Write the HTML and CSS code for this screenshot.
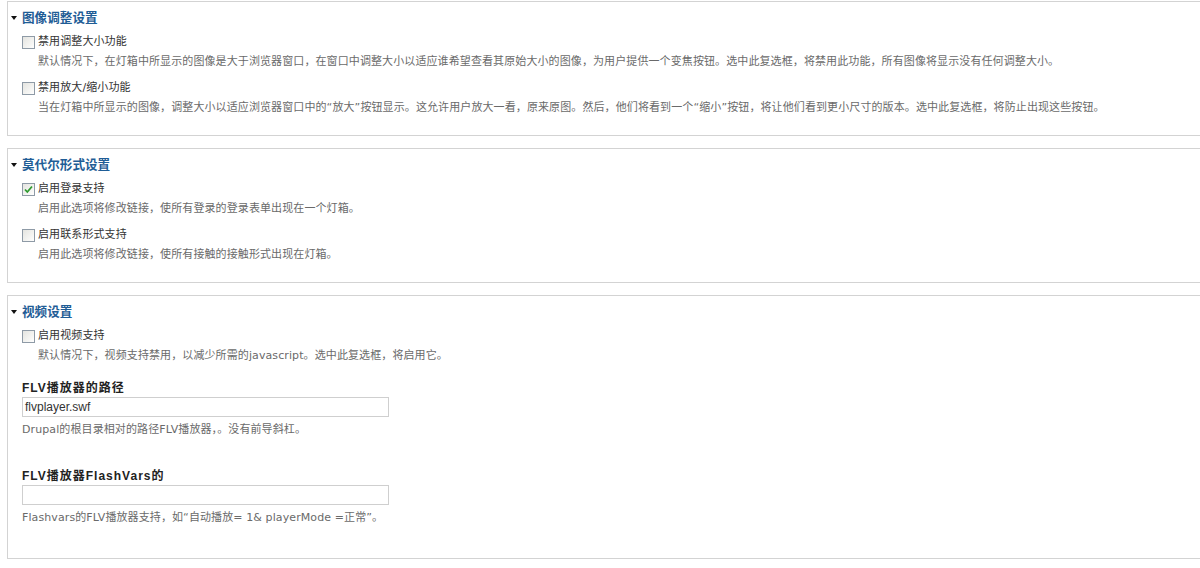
FILE: index.html
```html
<!DOCTYPE html>
<html lang="zh-CN">
<head>
<meta charset="utf-8">
<title>设置</title>
<link rel="stylesheet" href="styles.css">
</head>
<body>
<div class="page">
  <section class="box">
    <div class="legend"><span class="tri"></span>图像调整设置</div>
    <div class="item first">
      <div class="check-row"><span class="cb"></span><span class="lbl">禁用调整大小功能</span></div>
      <div class="desc indent">默认情况下，在灯箱中所显示的图像是大于浏览器窗口，在窗口中调整大小以适应谁希望查看其原始大小的图像，为用户提供一个变焦按钮。选中此复选框，将禁用此功能，所有图像将显示没有任何调整大小。</div>
    </div>
    <div class="item">
      <div class="check-row"><span class="cb"></span><span class="lbl">禁用放大/缩小功能</span></div>
      <div class="desc indent">当在灯箱中所显示的图像，调整大小以适应浏览器窗口中的“放大”按钮显示。这允许用户放大一看，原来原图。然后，他们将看到一个“缩小”按钮，将让他们看到更小尺寸的版本。选中此复选框，将防止出现这些按钮。</div>
    </div>
  </section>

  <section class="box">
    <div class="legend"><span class="tri"></span>莫代尔形式设置</div>
    <div class="item first">
      <div class="check-row"><span class="cb checked"><svg viewBox="0 0 13 13" width="13" height="13"><path d="M3 6.5 L5.3 9 L10 3.5" fill="none" stroke="#2f9a2f" stroke-width="1.8"/></svg></span><span class="lbl">启用登录支持</span></div>
      <div class="desc indent">启用此选项将修改链接，使所有登录的登录表单出现在一个灯箱。</div>
    </div>
    <div class="item">
      <div class="check-row"><span class="cb"></span><span class="lbl">启用联系形式支持</span></div>
      <div class="desc indent">启用此选项将修改链接，使所有接触的接触形式出现在灯箱。</div>
    </div>
  </section>

  <section class="box last">
    <div class="legend"><span class="tri"></span>视频设置</div>
    <div class="item first">
      <div class="check-row"><span class="cb"></span><span class="lbl">启用视频支持</span></div>
      <div class="desc indent">默认情况下，视频支持禁用，以减少所需的javascript。选中此复选框，将启用它。</div>
    </div>
    <div class="field f1">
      <div class="flabel">FLV播放器的路径</div>
      <div class="input">flvplayer.swf</div>
      <div class="desc">Drupal的根目录相对的路径FLV播放器，。没有前导斜杠。</div>
    </div>
    <div class="field f2">
      <div class="flabel">FLV播放器FlashVars的</div>
      <div class="input"></div>
      <div class="desc">Flashvars的FLV播放器支持，如“自动播放= 1&amp; playerMode =正常”。</div>
    </div>
  </section>
</div>
</body>
</html>
```

FILE: styles.css
```css
html, body {
  margin: 0;
  padding: 0;
  background: #ffffff;
  overflow: hidden;
}
body {
  font-family: "DejaVu Sans", "Noto Sans CJK SC", sans-serif;
  font-size: 11px;
  color: #333333;
}
.page {
  padding: 1px 0 0 7px;
  width: 1240px;
}
.box {
  border: 1px solid #d3d3d3;
  border-right: none;
  padding: 7px 0 19px 0;
  margin-bottom: 12px;
}
.box.last {
  padding-bottom: 32px;
}
.legend {
  display: flex;
  align-items: center;
  height: 16px;
  line-height: 16px;
  padding-left: 3px;
  font-family: "Noto Sans CJK SC", sans-serif;
  font-weight: 700;
  font-size: 12.6px;
  color: #1f5d96;
}
.tri {
  width: 0;
  height: 0;
  border-left: 3px solid transparent;
  border-right: 3px solid transparent;
  border-top: 4px solid #111111;
  margin-right: 5px;
  margin-top: 1px;
}
.item {
  padding-left: 14px;
  margin-top: 10px;
}
.item.first {
  margin-top: 9px;
}
.check-row {
  display: flex;
  align-items: center;
  height: 16px;
}
.cb {
  width: 11px;
  height: 11px;
  border: 1px solid #8e9aa6;
  background: linear-gradient(135deg, #e4e4e0 0%, #f6f6f4 70%, #ffffff 100%);
  display: inline-flex;
  margin-right: 3px;
  position: relative;
}
.cb svg {
  position: absolute;
  left: -1px;
  top: -1px;
}
.lbl {
  line-height: 16px;
  color: #333333;
  font-size: 11px;
  letter-spacing: 0.1px;
}
.desc {
  line-height: 16px;
  margin-top: 4px;
  color: #6a6a6a;
  font-size: 11px;
  letter-spacing: 0.1px;
  white-space: nowrap;
}
.desc.indent {
  padding-left: 16px;
}
.field {
  padding-left: 14px;
}
.field.f1 {
  margin-top: 16px;
}
.field.f2 {
  margin-top: 30px;
}
.flabel {
  line-height: 16px;
  font-family: "Liberation Sans", "Noto Sans CJK SC", sans-serif;
  font-weight: 700;
  font-size: 12px;
  letter-spacing: 1px;
  color: #222222;
}
.input {
  box-sizing: border-box;
  width: 367px;
  height: 20px;
  margin-top: 1px;
  border: 1px solid #cfcfcf;
  padding: 0 2px;
  line-height: 18px;
  font-family: "Liberation Sans", sans-serif;
  font-size: 12px;
  color: #333333;
}
.field .desc {
  margin-top: 5px;
}
```
